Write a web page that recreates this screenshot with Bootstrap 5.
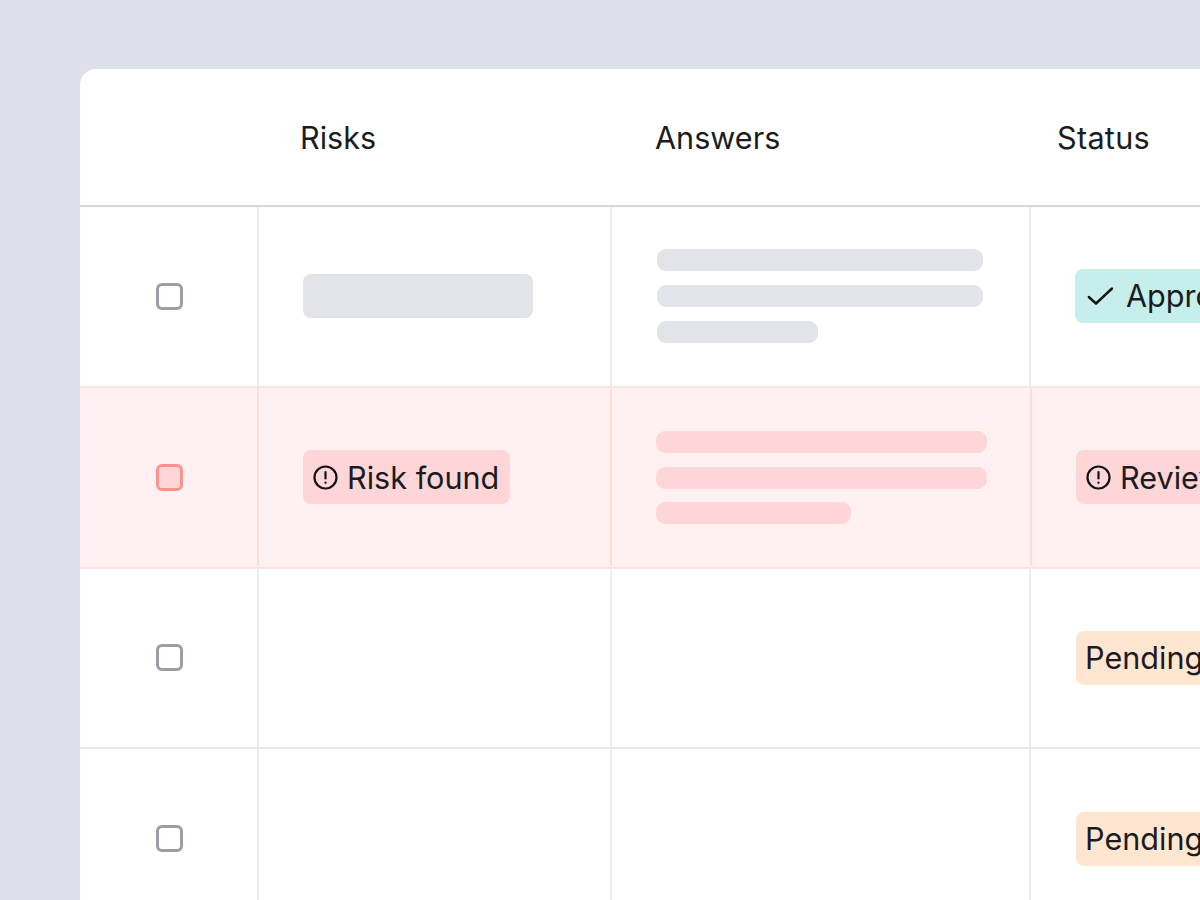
<!DOCTYPE html>
<html lang="en">
<head>
<meta charset="utf-8">
<title>Risks table</title>
<link href="https://cdn.jsdelivr.net/npm/bootstrap@5.3.0/dist/css/bootstrap.min.css" rel="stylesheet">
<style>
html, body { height: 900px; overflow: hidden; }
body { background: #dfe1ea; font-family: Inter, "Liberation Sans", sans-serif; color: #1b1b20; padding: 69px 0 0 80px; font-weight: 370; }
.sheet { background: #fff; width: 1300px; height: 900px; border-radius: 16px 0 0 0; overflow: hidden; }
.head-line { height: 138px; border-bottom: 2px solid #d6d7de; font-size: 30.6px; padding-top: 2px; }
.line { height: 181px; border-bottom: 2px solid #e8e9ee; }
.line-alert { background: #fff0f1; border-top: 2px solid #ffe3e2; border-bottom: 2px solid #ffe3e2; height: 183px; margin-top: -2px; margin-bottom: -1px; padding-bottom: 1px; }
.c1 { width: 179px; flex: none; padding-left: 2px; }
.c2 { width: 353px; flex: none; }
.c3 { width: 419px; flex: none; }
.c4 { flex: 1; }
.line-alert .c3 { width: 420px; }
.sep { border-right: 2px solid #eeeef2; }
.line-alert .sep { border-right-color: #ffdcd9; }
.head-line .c2 { padding-left: 41px; }
.head-line .c3 { padding-left: 43px; }
.head-line .c4 { padding-left: 26px; letter-spacing: .3px; }
.tick { width: 27px; height: 27px; border: 3px solid #9b9ca6; border-radius: 6px; }
.line-alert .tick { border-color: #ff928c; background: #ffd6d7; }
.shape { background: #e3e4ea; width: 230px; height: 44px; border-radius: 8px; }
.bars { width: 326px; gap: 14px; }
.line-alert .bars { width: 331px; margin-top: 1px; gap: 13.4px; }
.bar-item { height: 22px; background: #e3e4ea; border-radius: 9px; }
.line-alert .bar-item { background: #ffd6d7; }
.bar-short { width: 161px; }
.line-alert .bar-short { width: 195px; }
.tag { height: 54px; font-size: 30.6px; line-height: 1; padding: 2px 11px 0 9px; border-radius: 8px; white-space: nowrap; }
.tag-red { background: #ffd6d7; gap: 9px; padding-left: 10px; }
.tag-red .glyph { margin-top: -2px; }
.tag-teal { background: #c6eeea; gap: 12px; padding-left: 11px; margin-left: -1px; }
.tag-teal .glyph { margin-top: -2px; }
.tag-orange { background: #ffe6d0; }
.pad-c2 { padding-left: 44px; }
.pad-c3 { padding-left: 44px; }
.pad-c4 { padding-left: 45px; }
.line-alert .pad-c4 { padding-left: 44px; }
.lift { padding-bottom: 2px; }
.first-bars { margin-left: 1px; }
.glyph { flex: none; }
</style>
</head>
<body>
<div class="sheet">
  <div class="head-line d-flex align-items-center">
    <div class="c1"></div>
    <div class="c2">Risks</div>
    <div class="c3">Answers</div>
    <div class="c4">Status</div>
  </div>

  <div class="line d-flex">
    <div class="c1 sep d-flex align-items-center justify-content-center"><div class="tick"></div></div>
    <div class="c2 sep pad-c2 lift d-flex align-items-center"><div class="shape"></div></div>
    <div class="c3 sep pad-c3 lift d-flex align-items-center">
      <div class="bars first-bars d-flex flex-column">
        <div class="bar-item"></div><div class="bar-item"></div><div class="bar-item bar-short"></div>
      </div>
    </div>
    <div class="c4 pad-c4 lift d-flex align-items-center">
      <div class="tag tag-teal d-inline-flex align-items-center">
        <svg class="glyph" width="28" height="28" viewBox="0 0 28 28" fill="none" stroke="#111" stroke-width="2.4" stroke-linecap="round" stroke-linejoin="round"><path d="M2.8 15 10 21.5 26 6.5"/></svg>
        <span>Approved</span>
      </div>
    </div>
  </div>

  <div class="line line-alert d-flex">
    <div class="c1 sep d-flex align-items-center justify-content-center"><div class="tick"></div></div>
    <div class="c2 sep pad-c2 d-flex align-items-center">
      <div class="tag tag-red d-inline-flex align-items-center">
        <svg class="glyph" width="25" height="25" viewBox="0 0 25 25" fill="none" stroke="#111" stroke-width="2.2" stroke-linecap="round"><circle cx="12.5" cy="12.5" r="11"/><path d="M12.5 7v6.5"/><path d="M12.5 17.6v.2"/></svg>
        <span>Risk found</span>
      </div>
    </div>
    <div class="c3 sep pad-c3 d-flex align-items-center">
      <div class="bars d-flex flex-column">
        <div class="bar-item"></div><div class="bar-item"></div><div class="bar-item bar-short"></div>
      </div>
    </div>
    <div class="c4 pad-c4 d-flex align-items-center">
      <div class="tag tag-red d-inline-flex align-items-center">
        <svg class="glyph" width="25" height="25" viewBox="0 0 25 25" fill="none" stroke="#111" stroke-width="2.2" stroke-linecap="round"><circle cx="12.5" cy="12.5" r="11"/><path d="M12.5 7v6.5"/><path d="M12.5 17.6v.2"/></svg>
        <span>Review</span>
      </div>
    </div>
  </div>

  <div class="line d-flex">
    <div class="c1 sep d-flex align-items-center justify-content-center"><div class="tick"></div></div>
    <div class="c2 sep"></div>
    <div class="c3 sep"></div>
    <div class="c4 pad-c4 d-flex align-items-center"><div class="tag tag-orange d-inline-flex align-items-center">Pending</div></div>
  </div>

  <div class="line d-flex">
    <div class="c1 sep d-flex align-items-center justify-content-center"><div class="tick"></div></div>
    <div class="c2 sep"></div>
    <div class="c3 sep"></div>
    <div class="c4 pad-c4 d-flex align-items-center"><div class="tag tag-orange d-inline-flex align-items-center">Pending</div></div>
  </div>
</div>
<script src="https://cdn.jsdelivr.net/npm/bootstrap@5.3.0/dist/js/bootstrap.bundle.min.js"></script>
</body>
</html>
